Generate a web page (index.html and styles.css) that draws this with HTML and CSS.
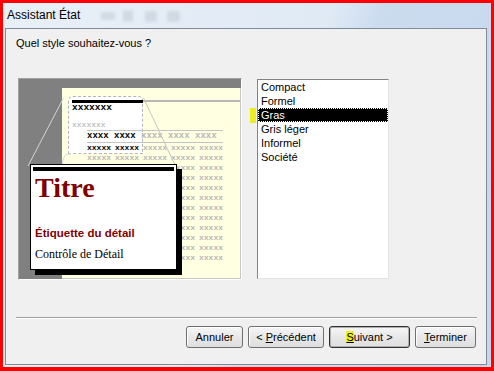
FILE: index.html
```html
<!DOCTYPE html>
<html lang="fr">
<head>
    <meta charset="UTF-8">
    <title>Assistant État</title>
    <link rel="stylesheet" href="styles.css">
</head>
<body>
    <div class="window">
        <div class="titlebar">
            <span class="title">Assistant État</span>
            <svg class="glass" width="96" height="18" viewBox="0 0 96 18">
                <defs><filter id="soft"><feGaussianBlur stdDeviation="1.8"/></filter></defs>
                <g filter="url(#soft)" fill="#8e9aa8" opacity="0.22">
                    <rect x="2" y="5" width="14" height="8" rx="2"/>
                    <rect x="24" y="3" width="10" height="12" rx="2"/>
                    <rect x="46" y="4" width="12" height="11" rx="2"/>
                    <rect x="68" y="4" width="13" height="11" rx="3"/>
                </g>
            </svg>
        </div>
        <div class="panel">
            <p class="question">Quel style souhaitez-vous ?</p>
            <div class="content">
                <div class="preview">
                    <div class="page">
                        <div class="zoom-frame"></div>
                        <div class="report">
                            <div class="rule"><span class="rule-ink"></span><span class="rule-gray"></span></div>
                            <div class="r-title">xxxxxxx</div>
                            <div class="r-group">xxxxxxx</div>
                            <div class="r-head"><span class="ink">xxxx xxxx </span>xxxx xxxx xxxx</div>
                            <div class="r-row"><span class="ink">xxxxx xxxxx </span>xxxxx xxxxx xxxxx</div>
                            <div class="r-row">xxxxx xxxxx xxxxx xxxxx xxxxx</div>
                            <div class="r-row">xxxxx xxxxx xxxxx xxxxx xxxxx</div>
                            <div class="r-row">xxxxx xxxxx xxxxx xxxxx xxxxx</div>
                            <div class="r-row">xxxxx xxxxx xxxxx xxxxx xxxxx</div>
                            <div class="r-row">xxxxx xxxxx xxxxx xxxxx xxxxx</div>
                            <div class="r-row">xxxxx xxxxx xxxxx xxxxx xxxxx</div>
                            <div class="r-row">xxxxx xxxxx xxxxx xxxxx xxxxx</div>
                            <div class="r-row">xxxxx xxxxx xxxxx xxxxx xxxxx</div>
                            <div class="r-row">xxxxx xxxxx xxxxx xxxxx xxxxx</div>
                            <div class="r-row">xxxxx xxxxx xxxxx xxxxx xxxxx</div>
                            <div class="r-row">xxxxx xxxxx xxxxx xxxxx xxxxx</div>
                        </div>
                    </div>
                    <svg class="guides" width="222" height="200" viewBox="0 0 222 200">
                        <line x1="44.5" y1="19" x2="9" y2="87" stroke="#d4d4d4" stroke-width="1"/>
                        <line x1="124.5" y1="19" x2="156" y2="86" stroke="#c4c4c4" stroke-width="1"/>
                        <path d="M43.5 85 Q44 76 49 75 L52 75" fill="none" stroke="#d8d8d8" stroke-width="1"/>
                    </svg>
                    <div class="callout">
                        <div class="callout-bar"></div>
                        <div class="c-title">Titre</div>
                        <div class="c-label">Étiquette du détail</div>
                        <div class="c-control">Contrôle de Détail</div>
                    </div>
                </div>
                <div class="list-wrap">
                    <span class="marker"></span>
                    <ul class="list">
                        <li>Compact</li>
                        <li>Formel</li>
                        <li class="selected">Gras</li>
                        <li>Gris léger</li>
                        <li>Informel</li>
                        <li>Société</li>
                    </ul>
                </div>
            </div>
            <div class="separator"></div>
            <div class="actions">
                <button class="btn btn-cancel">Annuler</button>
                <button class="btn btn-back">&lt; <u>P</u>récédent</button>
                <button class="btn btn-next"><u class="hl">S</u>uivant &gt;</button>
                <button class="btn btn-finish"><u>T</u>erminer</button>
            </div>
        </div>
    </div>
</body>
</html>
```

FILE: styles.css
```css
* { box-sizing: border-box; }
body { margin: 0; background: #fff; font-family: "Liberation Sans", Arial, sans-serif; font-size: 11px; color: #000; }

/* window frame */
.window {
    width: 494px; height: 371px;
    border: solid #f00; border-width: 3px 3px 4px 3px;
    background: linear-gradient(112deg, #e8eff7 0%, #e0eaf5 52%, #ccdcef 60%, #c3d7ee 100%);
    display: flex; flex-direction: column;
}
.titlebar { position: relative; height: 25px; display: flex; align-items: center; padding: 0 0 2px 4px; font-size: 12px; }
.title { position: relative; z-index: 1; }
.glass { position: absolute; left: 96px; top: 4px; }

.panel {
    flex: 1; margin: 0 4px 2px 2px;
    border: 1px solid #7f8c98; background: #f0f0f0;
    padding: 7px 9px 0 10px;
}
.question { margin: 0; line-height: 14px; }
.content { display: flex; align-items: flex-start; gap: 15px; margin-top: 28px; padding-left: 2px; }

/* style preview */
.preview {
    position: relative; width: 224px; height: 202px;
    border: 1px solid; border-color: #a0a0a0 #fff #fff #a0a0a0;
    background: #808080; padding: 9px 0 0 43px;
}
.page {
    position: relative; height: 100%; overflow: hidden;
    background: #ffffe1;
    border-right: 1px solid #c8c8c8; border-bottom: 1px solid #c8c8c8;
    padding: 12px 0 0 10px;
}
.zoom-frame {
    position: absolute; left: 6px; top: 8px; width: 75px; height: 58px;
    background: #fff; border: 1px dashed #b4b4b4; border-radius: 5px 5px 0 0;
}
.report { position: relative; font-family: "Liberation Mono", monospace; font-weight: bold; color: #b8b8b8; white-space: nowrap; }
.ink { color: #000; }
.rule { display: flex; align-items: flex-start; }
.rule-ink { width: 71px; height: 3px; background: #000; }
.rule-gray { flex: 1; height: 2px; background: #b8b8b8; }
.r-title { font-size: 9.5px; line-height: 10px; color: #000; }
.r-group { font-size: 8px; line-height: 10px; margin-top: 7px; color: #c4c4c4; }
.r-head {
    font-size: 9px; line-height: 11px; margin-left: 15px; width: 136px;
    border-top: 1px solid #c4c4c4; border-bottom: 1px solid #c4c4c4;
}
.r-row { font-size: 8px; line-height: 10px; margin-left: 15px; word-spacing: -0.8px; }

.guides { position: absolute; left: 0; top: 0; }

.callout {
    position: absolute; left: 11px; top: 85px; width: 147px; height: 106px;
    background: #fff; border: 1px solid #000; box-shadow: 5px 5px 0 #000;
    padding: 2px 2px 0 4px;
}
.callout-bar { height: 4px; background: #000; margin-left: -2px; }
.c-title { font: bold 28px/30px "Liberation Serif", "Times New Roman", serif; color: #800000; margin-top: 2px; }
.c-label { font: bold 11.5px/14px "Liberation Sans", Arial, sans-serif; color: #800000; margin-top: 23px; }
.c-control { font: 12px/14px "Liberation Serif", "Times New Roman", serif; margin-top: 7px; }

/* style list */
.list-wrap { position: relative; margin-top: 1px; }
.marker { position: absolute; left: -7px; top: 29px; width: 6px; height: 15px; background: #ecec1e; }
.list {
    margin: 0; padding: 0; list-style: none;
    width: 132px; height: 200px; background: #fff;
    border: 1px solid; border-color: #828282 #e3e3e3 #e3e3e3 #828282;
}
.list li { line-height: 14px; padding-left: 3px; }
.list .selected { background: #000; color: #fff; outline: 1px dotted #fff; outline-offset: -1px; }

/* bottom buttons */
.separator { margin-top: 37px; border-top: 1px solid #a0a0a0; border-bottom: 1px solid #fff; }
.actions { display: flex; justify-content: flex-end; gap: 5px; margin-top: 7px; padding-right: 1px; }
.btn {
    height: 22px; padding: 0;
    font: 11px "Liberation Sans", Arial, sans-serif; color: #000;
    border: 1px solid #707070; border-radius: 3px;
    background: linear-gradient(#f6f6f6, #e8e8e8 50%, #dedede);
    box-shadow: inset 1px 1px 0 #fff;
}
.btn-cancel { width: 57px; }
.btn-back { width: 76px; }
.btn-next { width: 81px; border-color: #2f2f2f; box-shadow: inset 0 0 0 1px #b0b0b0; }
.btn-finish { width: 61px; }
.hl { background: #f0f01e; }
```
